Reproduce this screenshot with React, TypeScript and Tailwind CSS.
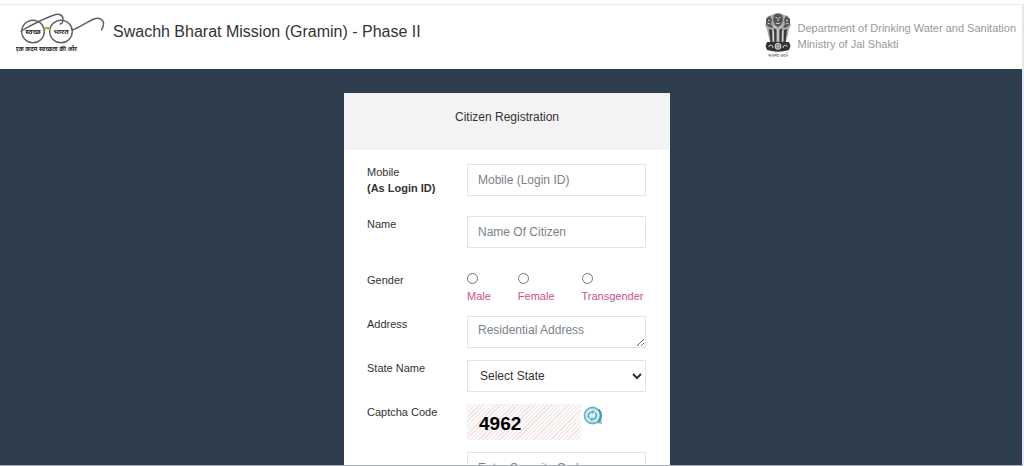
import React, { useState } from 'react';

const GENDERS = ['Male', 'Female', 'Transgender'];

const FIELD = 'block w-full border border-[#e2e4e6] bg-white text-xs text-[#333]';

// Gandhi spectacles with the mission slogan underneath
const MissionLogo: React.FC = () => (
    <svg viewBox="0 0 90 44" className="w-[90px] h-11 shrink-0" role="img" aria-label="Swachh Bharat">
        <g fill="none" stroke="#5b6066" strokeWidth="1.400" strokeLinecap="round">
            <circle cx="17" cy="19.500" r="11.3" />
            <circle cx="45" cy="19.500" r="11.3" />
            <path d="M5 19 C12 15 27 7 38 3 C43 1 47 3 47 7 C47 10 46 12 44 12" />
            <path d="M56.500 18 C64 15 71 10 78 7 C84 4.500 88 9 87.500 12 C87.500 15 86 17 85.500 18" />
        </g>
        <path d="M28 17 Q31 15 34 17" fill="none" stroke="#a9b23c" strokeWidth="2.400" />
        <g fill="#2a2a2a" fontFamily="'Noto Sans Devanagari', 'Noto Sans', sans-serif" fontWeight="700" textAnchor="middle">
            <text x="17" y="22" fontSize="7">स्वच्छ</text>
            <text x="45" y="22" fontSize="7">भारत</text>
            <text x="30" y="39" fontSize="6">एक कदम स्वच्छता की ओर</text>
        </g>
    </svg>
);

const StateEmblem: React.FC = () => (
    <svg viewBox="0 0 28 46" className="w-7 h-[46px] shrink-0" role="img" aria-label="State Emblem of India">
        {/* manes and heads */}
        <path d="M8 3 L11 1.500 L14 1 L17 1.500 L20 3 L24 4 L26 7 L25.500 10 L27 13 L25 17 L24 22 L22 30 H6 L4 22 L3 17 L1 13 L2.500 10 L2 7 L4 4 Z" fill="#a8a8a8" />
        <g fill="#555">
            <path d="M10 3 Q14 0 18 3 L19 8 L17 13 L14 15 L11 13 L9 8 Z" />
            <path d="M2 7 L6 4 L8 8 L7 12 L9 16 L5 15 L2 12 Z" />
            <path d="M26 7 L22 4 L20 8 L21 12 L19 16 L23 15 L26 12 Z" />
        </g>
        <g fill="#3a3a3a">
            <path d="M5 17 L8 18 L8.500 30 H6.500 Z" />
            <path d="M23 17 L20 18 L19.500 30 H21.500 Z" />
            <path d="M10 16 L12.500 18 V30 H10.500 Z" />
            <path d="M18 16 L15.500 18 V30 H17.500 Z" />
        </g>
        <g fill="none" stroke="#e6e6e6" strokeWidth="0.9">
            <path d="M11.500 5.500 H13 M15 5.500 H16.500 M14 6 V9 M12 11 Q14 12.500 16 11" />
            <path d="M4 8 L6 9 M3.500 11 L6 12 M24 8 L22 9 M24.500 11 L22 12" />
            <path d="M13.900 17 V29 M9.300 19 V29 M18.700 19 V29" />
            <path d="M10 14 L12 16.500 M18 14 L16 16.500" />
        </g>
        {/* abacus with the wheel */}
        <path d="M3 30 H25 L26.500 34 L25 38 Q14 41.500 3 38 L1.500 34 Z" fill="#333" />
        <circle cx="14" cy="34.300" r="3" fill="#666" stroke="#eee" strokeWidth="0.9" />
        <path d="M14 31.500 V37 M11.200 34.300 H16.800 M12 32.300 L16 36.300 M16 32.300 L12 36.300" stroke="#ddd" strokeWidth="0.5" />
        <path d="M4.500 35 L6 33 L8.500 34 L9 36 M23.500 35 L22 33 L19.500 34 L19 36" fill="none" stroke="#ccc" strokeWidth="1" />
        <text x="14" y="44.500" fontSize="4" textAnchor="middle" fill="#555" fontFamily="'Noto Sans Devanagari', 'Noto Sans', sans-serif">सत्यमेव जयते</text>
    </svg>
);

const RefreshIcon: React.FC = () => (
    <svg viewBox="0 0 20 20" className="w-5 h-5">
        <path d="M12 17 L19 18 L18 11 Z" fill="#a3b4bb" />
        <circle cx="9.500" cy="9.500" r="8" fill="#fff" stroke="#62b8ca" strokeWidth="1.800" />
        <circle cx="9.300" cy="9.500" r="6" fill="#e4f4f7" stroke="#a5d8e2" strokeWidth="0.8" />
        <path d="M15.500 3.500 A8.500 8.500 0 0 1 15.500 15.500" fill="none" stroke="#36a0b8" strokeWidth="2.200" />
        <g fill="none" stroke="#4aa8bd" strokeWidth="1.500">
            <path d="M6.500 12.300 A3.700 3.700 0 0 1 9.500 6" />
            <path d="M12.200 6.900 A3.700 3.700 0 0 1 9.200 13.200" />
        </g>
        <path d="M9.300 4 L12 6.100 L9.300 8 Z M9.400 15.200 L6.700 13.100 L9.400 11.200 Z" fill="#4aa8bd" />
    </svg>
);

interface RowProps {
    label: React.ReactNode;
    htmlFor?: string;
    children: React.ReactNode;
}

const Row: React.FC<RowProps> = ({ label, htmlFor, children }) => (
    <div className="flex">
        <label htmlFor={htmlFor} className="w-[100px] shrink-0 text-[11px] leading-4 text-[#333]">{label}</label>
        <div className="flex-1 min-w-0">{children}</div>
    </div>
);

const App: React.FC = () => {
    const [gender, setGender] = useState('');
    const [captcha, setCaptcha] = useState(4962);

    return (
        <div className="h-screen overflow-hidden flex flex-col bg-white pt-1 font-['Liberation_Sans',Arial,sans-serif]">
            <div className="flex-1 min-h-0 flex flex-col border-t border-t-[#ececec] border-r-2 border-r-[#e4e6f0] border-b border-b-[#a9afba]">
                <header className="h-16 shrink-0 flex items-start justify-between pl-4 pr-1.5 pt-[7px]">
                    <div className="flex items-start gap-[7px]">
                        <MissionLogo />
                        <h1 className="pt-2 text-base leading-6 text-[#333]">Swachh Bharat Mission (Gramin) - Phase II</h1>
                    </div>
                    <div className="flex items-start gap-1.5">
                        <StateEmblem />
                        <p className="pt-2 text-[11px] leading-4 text-[#999]">
                            Department of Drinking Water and Sanitation<br />
                            Ministry of Jal Shakti
                        </p>
                    </div>
                </header>

                <main className="flex-1 min-h-0 overflow-hidden bg-[#2f3e4e] pt-6 pr-2">
                    <form className="w-[326px] mx-auto bg-white" onSubmit={(e) => e.preventDefault()}>
                        <h2 className="h-[57px] pt-4 bg-[#f3f3f3] text-center text-xs leading-4 text-[#333]">Citizen Registration</h2>

                        <div className="flex flex-col gap-3 pt-[14px] pb-6 pl-[23px] pr-6">
                            <div className="flex flex-col gap-5 pb-3">
                                <Row htmlFor="mobile" label={<>Mobile<br /><b>(As Login ID)</b></>}>
                                    <input id="mobile" type="tel" placeholder="Mobile (Login ID)" className={`${FIELD} h-8 px-[10px] placeholder:text-[#7b8288]`} />
                                </Row>
                                <Row htmlFor="name" label="Name">
                                    <input id="name" type="text" placeholder="Name Of Citizen" className={`${FIELD} h-8 px-[10px] placeholder:text-[#7b8288]`} />
                                </Row>
                            </div>

                            <div className="flex" role="radiogroup" aria-labelledby="gender-label">
                                <span id="gender-label" className="w-[100px] shrink-0 text-[11px] leading-4 text-[#333]">Gender</span>
                                <div className="flex gap-[27px]">
                                    {GENDERS.map((g) => (
                                        <label key={g} className="flex flex-col text-[11px] leading-4 text-[#c9528d]">
                                            <span className="h-4 flex items-center pb-1">
                                                <input
                                                    type="radio"
                                                    name="gender"
                                                    value={g}
                                                    checked={gender === g}
                                                    onChange={() => setGender(g)}
                                                    className="appearance-none w-[11px] h-[11px] rounded-full border border-[#767676] bg-white checked:border-4 checked:border-[#0075ff]"
                                                />
                                            </span>
                                            {g}
                                        </label>
                                    ))}
                                </div>
                            </div>

                            <Row htmlFor="address" label="Address">
                                <textarea id="address" placeholder="Residential Address" className={`${FIELD} h-8 px-[10px] py-[5px] leading-4 overflow-hidden resize placeholder:text-[#7b8288]`} />
                            </Row>

                            <Row htmlFor="state" label="State Name">
                                <select id="state" className={`${FIELD} h-8 pl-2`}>
                                    <option>Select State</option>
                                </select>
                            </Row>

                            <Row htmlFor="captcha" label="Captcha Code">
                                <div className="flex items-start gap-[2px]">
                                    <div className="w-[114px] h-9 pl-3 pt-1 flex items-center text-[19px] font-bold text-black bg-[repeating-linear-gradient(135deg,#f1e2e4_0px,#f1e2e4_1px,#fdfafa_1px,#fdfafa_3px)]">
                                        {captcha}
                                    </div>
                                    <button
                                        type="button"
                                        aria-label="Refresh captcha"
                                        onClick={() => setCaptcha(1000 + Math.floor(Math.random() * 9000))}
                                        className="mt-[2px]"
                                    >
                                        <RefreshIcon />
                                    </button>
                                </div>
                            </Row>

                            <div className="pl-[100px]">
                                <input id="captcha" type="text" placeholder="Enter Security Code" className={`${FIELD} h-8 px-[10px] placeholder:text-[#7b8288]`} />
                            </div>
                        </div>
                    </form>
                </main>
            </div>
        </div>
    );
};

export default App;
